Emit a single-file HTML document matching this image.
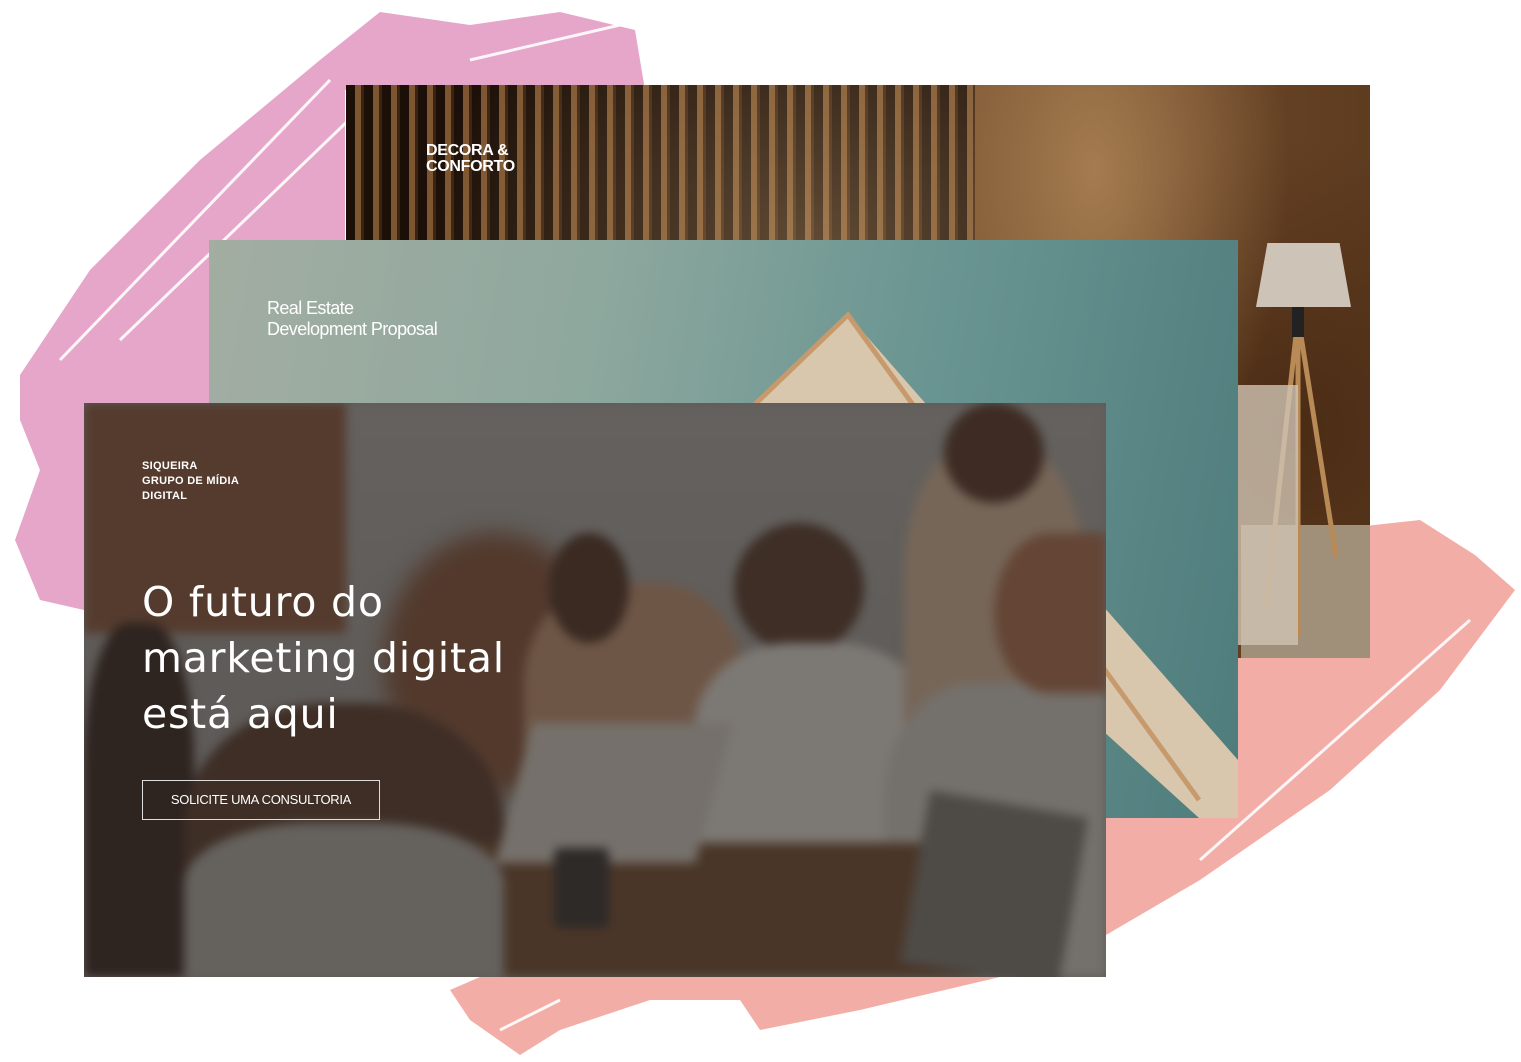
<!DOCTYPE html>
<html><head><meta charset="utf-8"><style>
*{margin:0;padding:0;box-sizing:border-box}
body{width:1521px;height:1062px;background:#fff;position:relative;overflow:hidden;font-family:"Liberation Sans",sans-serif}
.abs{position:absolute}
</style></head><body>
<svg class="abs" style="left:0;top:0" width="1521" height="1062">
<polygon fill="#e6a6c9" points="20,375 90,270 200,160 320,60 380,12 470,25 560,12 635,30 645,90 345,90 345,240 209,240 209,403 84,403 84,610 40,600 15,540 40,470 20,420"/>
<polygon fill="#f3ada7" points="1238,540 1420,520 1475,555 1515,590 1440,690 1330,790 1200,880 1106,935 1106,818 1238,818"/>
<polygon fill="#f3ada7" points="450,990 480,977 1000,977 860,1010 760,1030 740,1000 650,1000 560,1030 520,1055 470,1020"/>
<g stroke="#fff" stroke-width="3" opacity=".9">
<line x1="60" y1="360" x2="330" y2="80"/><line x1="120" y1="340" x2="380" y2="90"/><line x1="470" y1="60" x2="620" y2="25"/>
<line x1="1200" y1="860" x2="1470" y2="620"/><line x1="500" y1="1030" x2="560" y2="1000"/>
</g>
</svg>
<!-- card 1 -->
<div class="abs" style="left:346px;top:85px;width:1024px;height:573px;background:linear-gradient(90deg,#6e4a2a,#9c7348 30%,#7a5230 60%,#5e3c20);overflow:hidden">
 <div class="abs" style="left:0;top:0;width:629px;height:573px;background:repeating-linear-gradient(90deg,#1c0f07 0 9px,#7d5530 9px 15px,#3a2312 15px 18px)"></div>
 <div class="abs" style="left:0;top:0;width:629px;height:573px;background:radial-gradient(ellipse at 75% 30%,rgba(230,190,140,.35),transparent 60%)"></div>
 <div class="abs" style="left:629px;top:0;width:395px;height:573px;background:radial-gradient(ellipse at 30% 15%,#a57c50,transparent 50%),radial-gradient(ellipse at 80% 60%,#4a2b14,transparent 60%)"></div>
 <div class="abs" style="left:895px;top:440px;width:129px;height:133px;background:#a0907a"></div>
 <div class="abs" style="left:910px;top:158px;width:95px;height:64px;background:#cdc3b6;clip-path:polygon(12% 0,88% 0,100% 100%,0 100%)"></div>
 <svg class="abs" style="left:880px;top:222px" width="144" height="351"><g stroke="#b88a55" stroke-width="5"><line x1="72" y1="10" x2="40" y2="300"/><line x1="72" y1="10" x2="110" y2="250"/><line x1="72" y1="10" x2="72" y2="330"/></g><rect x="66" y="0" width="12" height="30" fill="#222"/></svg>
 <div class="abs" style="left:892px;top:300px;width:60px;height:260px;background:#cfc3b3;opacity:.8"></div>
 <div class="abs" style="left:80px;top:58px;color:#fff;font-weight:bold;font-size:16px;line-height:16px;letter-spacing:-0.3px">DECORA &amp;<br>CONFORTO</div>
</div>
<!-- card 2 -->
<div class="abs" style="left:209px;top:240px;width:1029px;height:578px;background:linear-gradient(100deg,#a3ada2 0%,#8ea89e 35%,#6a9592 65%,#4e7c7c 100%);overflow:hidden">
 <svg class="abs" style="left:0;top:0" width="1029" height="578"><polygon points="639,75 540,170 990,578 1029,578 1029,520" fill="#d9c7ad"/><polyline points="540,170 639,75 990,560" fill="none" stroke="#c69a6c" stroke-width="5"/></svg>
 <div class="abs" style="left:58px;top:58px;color:#fff;font-size:18px;line-height:21px;letter-spacing:-0.6px">Real Estate<br>Development Proposal</div>
</div>
<!-- card 3 -->
<div class="abs" style="left:84px;top:403px;width:1022px;height:574px;background:#5f5b58;overflow:hidden">
 <div class="abs" style="left:0;top:0;width:1022px;height:574px;filter:blur(5px)">
 <div class="abs" style="left:0;top:0;width:262px;height:230px;background:#553b2e"></div>
 <div class="abs" style="left:262px;top:0;width:760px;height:574px;background:linear-gradient(180deg,#64615e,#5a5653)"></div>
 <div class="abs" style="left:300px;top:130px;width:220px;height:260px;border-radius:50%;background:#52392c;filter:blur(10px)"></div>
 <div class="abs" style="left:0;top:220px;width:110px;height:354px;background:#2e2420;border-radius:40% 40% 0 0"></div>
 <div class="abs" style="left:100px;top:300px;width:320px;height:274px;background:#3e2e26;border-radius:45% 45% 0 0"></div>
 <div class="abs" style="left:440px;top:180px;width:220px;height:250px;background:#6e5646;border-radius:40% 40% 0 0"></div>
 <div class="abs" style="left:465px;top:130px;width:80px;height:110px;background:#3a2a22;border-radius:50%"></div>
 <div class="abs" style="left:650px;top:120px;width:130px;height:130px;background:#3e2e26;border-radius:50%"></div>
 <div class="abs" style="left:610px;top:240px;width:240px;height:220px;background:#7c7874;border-radius:40% 40% 10% 10%"></div>
 <div class="abs" style="left:820px;top:40px;width:180px;height:320px;background:#766658;border-radius:40% 40% 0 0"></div>
 <div class="abs" style="left:860px;top:0;width:100px;height:100px;background:#3e2c24;border-radius:50%"></div>
 <div class="abs" style="left:800px;top:280px;width:222px;height:294px;background:#74706b;border-radius:40% 0 0 0"></div>
 <div class="abs" style="left:910px;top:130px;width:112px;height:160px;background:#654636;border-radius:50% 0 0 50%"></div>
 <div class="abs" style="left:300px;top:440px;width:640px;height:134px;background:#4a3628"></div>
 <div class="abs" style="left:430px;top:320px;width:200px;height:140px;background:#75706b;transform:skewX(-15deg)"></div>
 <div class="abs" style="left:470px;top:445px;width:55px;height:80px;background:#2e2a28;border-radius:6px"></div>
 <div class="abs" style="left:830px;top:400px;width:160px;height:174px;background:#4e4a46;transform:rotate(10deg)"></div>
 <div class="abs" style="left:100px;top:420px;width:320px;height:154px;background:#65615d;border-radius:40% 40% 0 0"></div>
 </div>
 <div class="abs" style="left:58px;top:56px;color:#fff;font-weight:bold;font-size:11px;line-height:15px;letter-spacing:0.3px">SIQUEIRA<br>GRUPO DE MÍDIA<br>DIGITAL</div>
 <div class="abs" style="left:58px;top:171px;color:#fff;font-family:'DejaVu Sans',sans-serif;font-size:41px;line-height:56px;letter-spacing:0.8px;white-space:nowrap">O futuro do<br>marketing digital<br>está aqui</div>
 <div class="abs" style="left:58px;top:377px;width:238px;height:40px;border:1px solid #ddd;color:#fff;font-size:13px;line-height:38px;text-align:center;letter-spacing:-0.3px">SOLICITE UMA CONSULTORIA</div>
</div>
</body></html>
